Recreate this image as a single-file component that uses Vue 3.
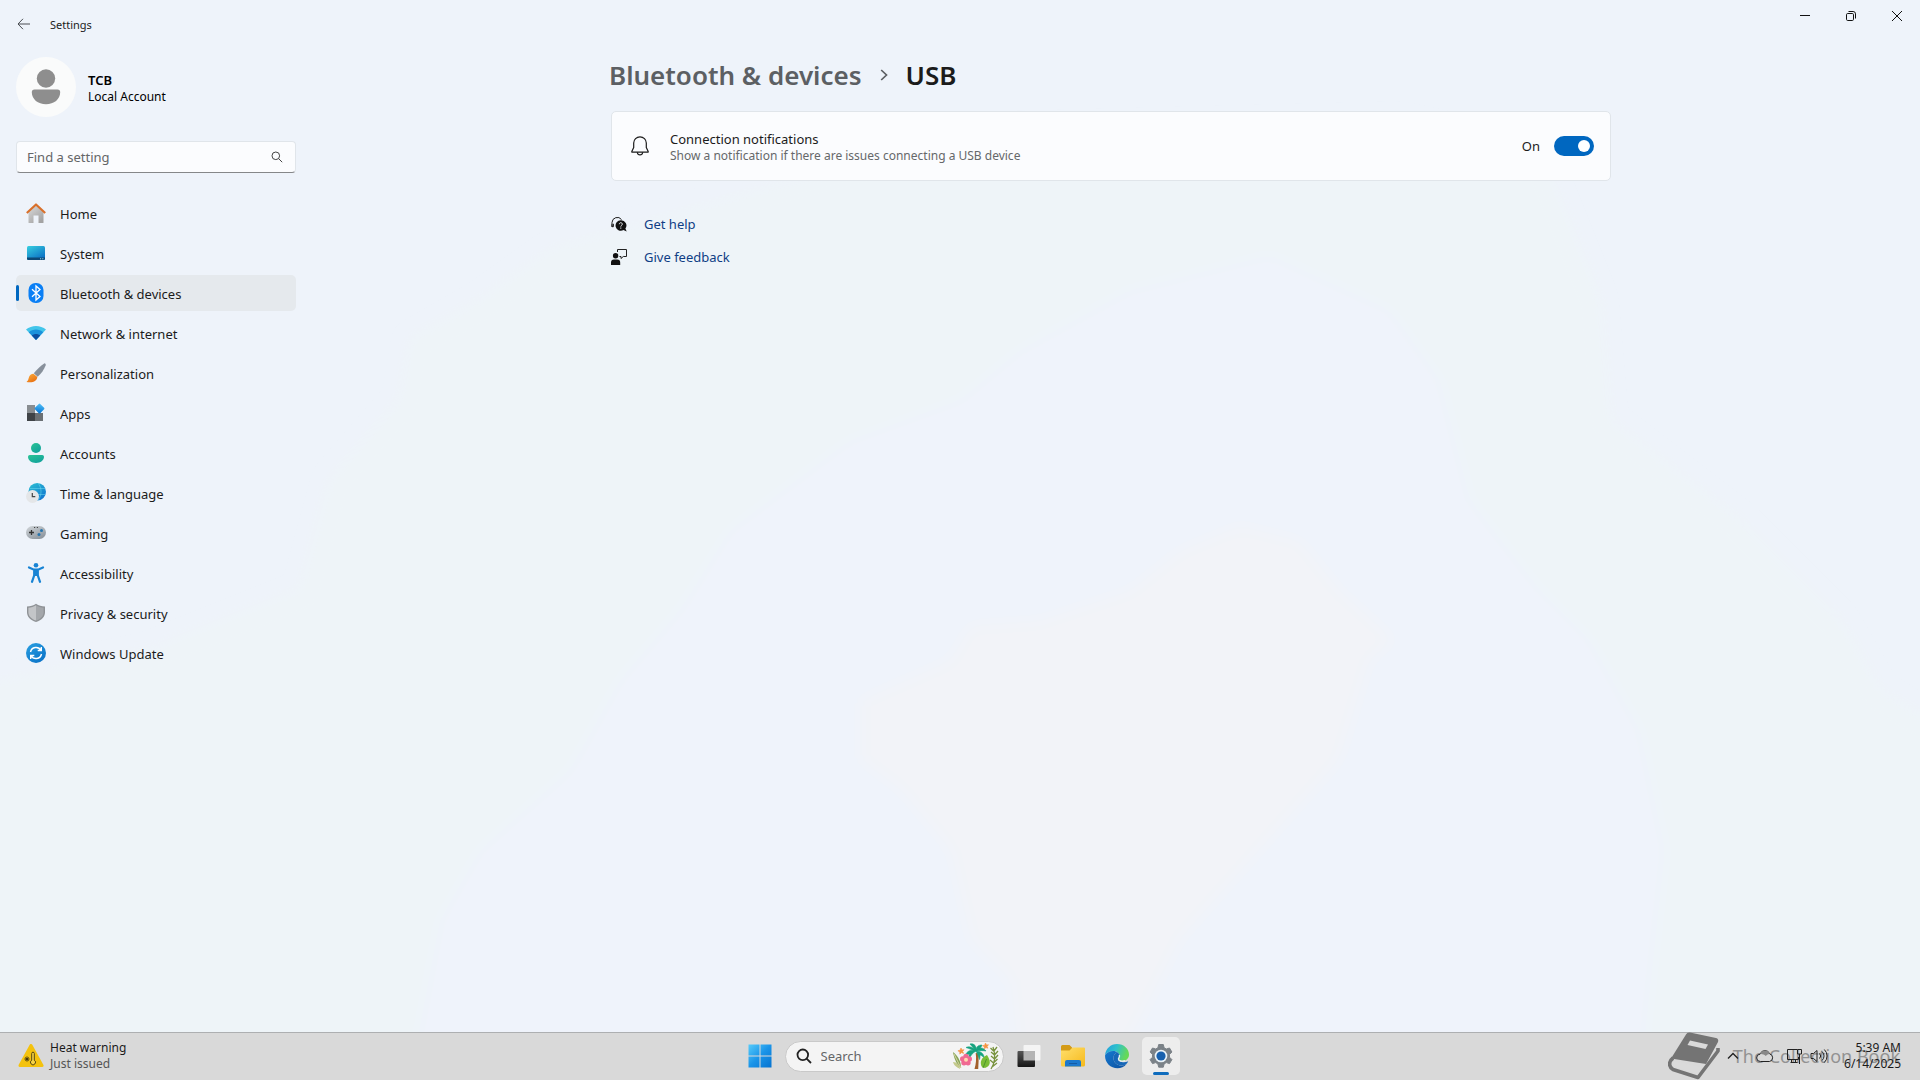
<template>
  <div class="desktop">
    <div class="window">
      <svg class="mica" viewBox="0 0 1920 1032" preserveAspectRatio="none" aria-hidden="true">
        <defs>
          <filter id="soft"><feGaussianBlur stdDeviation="8" /></filter>
        </defs>
        <g filter="url(#soft)">
          <path
            d="M-40 690L150 650 300 590 330 480 400 400 410 340 480 300 550 250 760 190 1000 130 1400 120 1540 150 1600 300 1610 420 1740 520 1790 570 1840 620 1880 690 1960 740V1080H-40z"
            fill="#eef4f8"
          />
          <path
            d="M1270 255L1130 290 1020 350 960 400 850 440 730 530 680 610 620 680 570 770 480 850 440 920 410 1080H1640L1665 850 1640 730 1590 640 1540 590 1470 500 1440 380 1390 310z"
            fill="#eff3fb"
          />
          <path
            d="M1240 525L1180 550 1130 590 1040 620 970 625 950 660 860 700V760L900 790 950 850 970 940 1010 980 1020 1080H1110L1180 940 1260 850 1340 760 1370 660 1395 640 1340 590 1300 540z"
            fill="#f2f3f8"
          />
        </g>
      </svg>

      <header class="titlebar">
        <button class="back" aria-label="Back">
          <svg width="14" height="14" viewBox="0 0 14 14" fill="none" stroke="#4a4d52">
            <path d="M13 7H1M6 1.8L1 7l5 5.2" />
          </svg>
        </button>
        <span class="title">Settings</span>
        <div class="winButtons">
          <button aria-label="Minimize">
            <svg width="10" height="10" viewBox="0 0 10 10" stroke="#111"><path d="M0 4.5h10" /></svg>
          </button>
          <button aria-label="Restore">
            <svg width="10" height="10" viewBox="0 0 10 10" fill="none" stroke="#111">
              <rect x=".5" y="2.5" width="7" height="7" rx="1.2" />
              <path d="M2.5 .5h4.6a2.4 2.4 0 0 1 2.4 2.4v4.6" />
            </svg>
          </button>
          <button aria-label="Close">
            <svg width="10" height="10" viewBox="0 0 10 10" stroke="#111"><path d="M0 0l10 10M10 0L0 10" /></svg>
          </button>
        </div>
      </header>

      <div class="body">
        <aside class="sidebar">
          <div class="account">
            <span class="avatar">
              <svg width="60" height="60" viewBox="0 0 60 60" fill="#8e8e8e">
                <circle cx="30" cy="21.500" r="9.2" />
                <path d="M18.500 32.500h23a2.700 2.700 0 0 1 2.700 2.700c0 7-6.200 12-14.200 12s-14.200-5-14.200-12a2.700 2.700 0 0 1 2.700-2.700z" />
              </svg>
            </span>
            <div class="user">
              <div class="userName">TCB</div>
              <div class="userType">Local Account</div>
            </div>
          </div>

          <label class="find">
            <input v-model="query" type="text" placeholder="Find a setting" aria-label="Find a setting">
            <svg width="12" height="12" viewBox="0 0 12 12" fill="none" stroke="#444">
              <circle cx="4.800" cy="4.800" r="3.800" />
              <path d="M7.600 7.600l3.600 3.600" />
            </svg>
          </label>

          <nav>
            <a
              v-for="item in navItems"
              :key="item.name"
              href="#"
              class="navItem"
              :class="{ active: item.name === current }"
              @click.prevent="current = item.name"
            >
              <svg width="20" height="20" viewBox="0 0 20 20" v-html="item.icon"></svg>
              <span>{{ item.name }}</span>
            </a>
          </nav>
        </aside>

        <main class="main">
          <div class="content">
            <h1>
              <a href="#">Bluetooth &amp; devices</a>
              <svg width="8" height="12" viewBox="0 0 8 12" fill="none" stroke="#5c5f63" stroke-width="1.700">
                <path d="M1.200 1l5.300 5-5.300 5" />
              </svg>
              <span>USB</span>
            </h1>

            <section class="card">
              <svg width="18" height="20" viewBox="0 0 18 20" fill="none" stroke="#1b1b1b" stroke-width="1.200">
                <path d="M9 .8a6.300 6.300 0 0 0-6.300 6.300v4.500L.8 15.600v.5h16.400v-.5l-1.900-4V7.100A6.300 6.300 0 0 0 9 .8z" stroke-linejoin="round" />
                <path d="M6.300 16.200c.2 1.600 1.300 2.700 2.700 2.700s2.500-1.100 2.700-2.700" />
              </svg>
              <label for="connNotify" class="cardText">
                <span class="cardTitle">Connection notifications</span>
                <span class="cardDesc">Show a notification if there are issues connecting a USB device</span>
              </label>
              <span class="state">{{ notify ? 'On' : 'Off' }}</span>
              <input id="connNotify" v-model="notify" type="checkbox" role="switch" class="toggle">
            </section>

            <div class="links">
              <a href="#">
                <svg width="16" height="16" viewBox="0 0 16 16">
                  <path d="M1 11V6.500A5.300 5.300 0 0 1 10.500 3.500M1 8.200v2.500h1.400V7.800" fill="none" stroke="#1b1b1b" />
                  <path d="M9.800 4.200a5.300 5.300 0 1 0 2.700 9.900l3.200 1.500-1.300-3A5.300 5.300 0 0 0 9.800 4.200z" fill="#111" />
                  <path d="M8.300 8.200c0-2 3-2 3 0 0 1.200-1.500 1.100-1.500 2.400M9.800 11.500v1.200" fill="none" stroke="#f3f6fa" />
                </svg>
                <span>Get help</span>
              </a>
              <a href="#">
                <svg width="16" height="16" viewBox="0 0 16 16">
                  <circle cx="4.600" cy="6.800" r="2.700" fill="#111" />
                  <path d="M0 16v-2.500a3 3 0 0 1 3-3h3.200a3 3 0 0 1 3 3V16z" fill="#111" />
                  <path d="M6.500 3V.5h9v7h-3.200l-2.300 2v-2H8.500" fill="none" stroke="#222" />
                </svg>
                <span>Give feedback</span>
              </a>
            </div>
          </div>
        </main>
      </div>
    </div>

    <footer class="taskbar">
      <button class="weather">
        <svg width="26" height="24" viewBox="0 0 26 24">
          <path d="M13 1.500L24 21.500H2z" fill="#f4c20d" stroke="#f4c20d" stroke-width="3" stroke-linejoin="round" />
          <circle cx="9" cy="15" r="1.600" fill="#453a10" />
          <path d="M9 12v6M6 15h6M7 13l4 4M11 13l-4 4" stroke="#453a10" stroke-width=".6" />
          <path d="M13.700 9.500a1.300 1.300 0 0 1 2.600 0v6.700a2.500 2.500 0 1 1-2.600 0z" fill="#f7d345" stroke="#453a10" stroke-width=".9" />
        </svg>
        <span>
          <span class="line">Heat warning</span>
          <span class="line dim">Just issued</span>
        </span>
      </button>

      <div class="dock">
        <button class="tile" aria-label="Start">
          <svg width="24" height="24" viewBox="0 0 24 24">
            <defs>
              <linearGradient id="win" x1="0" y1="0" x2="24" y2="24" gradientUnits="userSpaceOnUse">
                <stop offset="0" stop-color="#58cdfb" />
                <stop offset=".5" stop-color="#1a94e8" />
                <stop offset="1" stop-color="#0571cf" />
              </linearGradient>
            </defs>
            <path d="M.5.500h11v11H.5zM12.500.500h11v11h-11zM.5 12.500h11v11H.5zM12.500 12.500h11v11h-11z" fill="url(#win)" />
          </svg>
        </button>

        <label class="search">
          <svg width="16" height="16" viewBox="0 0 16 16" fill="none" stroke="#222" stroke-width="1.800">
            <circle cx="6.800" cy="6.800" r="5.300" />
            <path d="M10.600 10.600l4.400 4.400" />
          </svg>
          <input type="text" placeholder="Search" aria-label="Search">
          <svg width="48" height="28" viewBox="0 0 48 28">
            <path d="M10 26C6 23 3 17 2 10c5 4 8 9 8 16z" fill="#86a558" />
            <path d="M9 27c-3-2-6-3-7-7 4 0 7 3 7 7z" fill="#c4c98c" />
            <path d="M3 12l7 14" stroke="#d9d3a0" fill="none" />
            <path d="M23.500 27c1.500-5 2-10 1.200-16l2.500.3c.8 5 .3 10 0 15.700z" fill="#a3602b" />
            <path d="M25 9C20 7 16 9 14.500 13c2-.8 3-.5 4-1-.8 2-.7 3 .3 4.500.7-3.500 3-5.500 6.200-7.500zM25 9c-3-4-7-5-10-3.500 3 1 6 2.500 10 3.500zM25 9c-2-2-4-5-6-7 4-.8 7 2 6 7zM25 9c0-4 2-6 6-6-.5 2-2 4-6 6zM25 9c3-4 7-4 10 0-3-.5-6-.5-10 0zM25 9c5 0 8 3 8 6.500-2-1.500-3-2.500-4-2.500 0 2 0 3-.5 4.500-1-3-2-6-3.500-8.500z" fill="#16a37f" stroke="#16a37f" stroke-width=".6" />
            <path d="M31 25c-3-5 0-10 5-12 4 6 4 11-2 13z" fill="#79bd35" />
            <path d="M32 26l3.500-9" stroke="#4d942b" fill="none" />
            <g stroke="#78933e" stroke-width="1.300" fill="none">
              <path d="M40 27c4-6 5-13 2-22M42.500 9l-3-3M43.500 13l-3.500-3M43.500 17l-3.500-3M42.500 21l-3.500-3M43 9l3-4M43.500 13l3.500-4M43.500 17l3.500-4M42.500 21l4-4M41 25l5-4" />
            </g>
            <g fill="#f06a92">
              <circle cx="15" cy="14.500" r="2.700" /><circle cx="18.300" cy="17" r="2.700" />
              <circle cx="17" cy="20.800" r="2.700" /><circle cx="13" cy="20.800" r="2.700" />
              <circle cx="11.700" cy="17" r="2.700" />
            </g>
            <circle cx="15" cy="17.800" r="2" fill="#ffd8b0" />
            <path d="M10 6l1 2 2-.3-1.400 1.700 1.100 2-2.200-.8-1.700 1.500.1-2.200-2-1.100 2.200-.6zM34.500 1l1 2 2-.3-1.400 1.700.8 1.800-2-.6-1.500 1.300V4.700l-1.900-1 2.200-.5z" fill="#f59342" stroke="#f59342" stroke-width=".6" />
          </svg>
        </label>

        <button class="tile" aria-label="Task view">
          <svg width="24" height="24" viewBox="0 0 24 24">
            <defs>
              <linearGradient id="tv" x2="0" y2="1"><stop stop-color="#555" /><stop offset="1" stop-color="#161616" /></linearGradient>
            </defs>
            <rect x="6.500" y="1" width="17" height="15.500" rx="1" fill="#f4f4f4" />
            <rect x=".5" y="7" width="17.500" height="16" rx="1" fill="url(#tv)" />
            <path d="M6.500 7H18v9.500H6.500z" fill="#b4b4b4" />
          </svg>
        </button>
        <button class="tile" aria-label="File Explorer">
          <svg width="26" height="24" viewBox="0 0 26 24">
            <defs>
              <linearGradient id="fold" x2="1" y2="1"><stop stop-color="#ffdf6b" /><stop offset="1" stop-color="#f6b91c" /></linearGradient>
            </defs>
            <path d="M1 2.500A1.500 1.500 0 0 1 2.500 1h7l2.500 2.500V8H1z" fill="#d49b17" />
            <path d="M1 6.500h8.500l3-3H24a1 1 0 0 1 1 1V21a1.500 1.500 0 0 1-1.500 1.500h-21A1.500 1.500 0 0 1 1 21z" fill="url(#fold)" />
            <path d="M5 22.500V18a2 2 0 0 1 2-2h12a2 2 0 0 1 2 2v4.500z" fill="#1c79cd" />
            <path d="M9 19.500h8" stroke="#155ca5" />
          </svg>
        </button>
        <button class="tile" aria-label="Edge">
          <svg width="26" height="26" viewBox="0 0 26 26">
            <defs>
              <linearGradient id="edgeTop" x2="1" y2=".3"><stop stop-color="#219ce0" /><stop offset=".5" stop-color="#2fc1cb" /><stop offset="1" stop-color="#66d957" /></linearGradient>
              <linearGradient id="edgeLow" x2="1" y2="1"><stop stop-color="#1579d0" /><stop offset="1" stop-color="#0c509f" /></linearGradient>
            </defs>
            <path d="M1 12.500C1.600 5.700 6.700 1 13 1c7 0 12 5 12 10.500 0 4-3 6.500-6.500 6.500-2.500 0-4-1-4-2 0-.8 1-1.200 1-3 0-3-3-5-6.500-5C5.500 8 2.500 9.500 1 12.500z" fill="url(#edgeTop)" />
            <path d="M1 12.500C2.500 9.500 5.500 8 9 8c2 0 3.600.6 4.800 1.600C11 9.800 9.500 12.500 9.500 15c0 5 4.500 8 9 7.500 1.500-.2 2.700-.7 4-1.500-2.300 3-5.600 4.200-9 4.200C6.500 25.200 1 20 1 12.500z" fill="url(#edgeLow)" />
            <path d="M13.800 9.600C11 9.800 9.500 12.500 9.500 15c0 5 4.500 8 9 7.500 2.700-.3 5-2 5.700-4.300-3.700 2-9.700 1-9.700-2.200 0-.8 1-1.200 1-3 0-1.400-.7-2.600-1.700-3.400z" fill="#1667b8" />
            <path d="M15.300 12c.8 1.800-.8 3-.8 4 0 2 3.500 2.700 6.500 1.700" stroke="#e8eef2" stroke-width="1.400" fill="none" />
          </svg>
        </button>
        <button class="tile running" aria-label="Settings">
          <svg width="26" height="26" viewBox="0 0 26 26">
            <path d="M10.700 1.500h4.600l.8 3.300 2.200 1.200 3.200-1 2.400 4-2.400 2.400v2.800l2.400 2.400-2.400 4-3.200-1-2.200 1.300-.8 3.300h-4.600l-.8-3.300-2.200-1.300-3.200 1-2.400-4 2.400-2.400v-2.800L2.100 9l2.400-4 3.200 1 2.200-1.200z" fill="#7b8288" stroke="#7b8288" stroke-linejoin="round" />
            <circle cx="13" cy="13" r="6.300" fill="#e9f2f8" />
            <circle cx="13" cy="13" r="4.600" fill="#1760ae" />
          </svg>
        </button>
      </div>

      <div class="tray">
        <button aria-label="Show hidden icons">
          <svg width="12" height="8" viewBox="0 0 12 8" fill="none" stroke="#222" stroke-width="1.400"><path d="M1 6.500l5-5 5 5" /></svg>
        </button>
        <button aria-label="OneDrive">
          <svg width="18" height="14" viewBox="0 0 18 14" stroke="#222">
            <path d="M4.500 12.500a3.700 3.700 0 0 1-.3-7.400 5 5 0 0 1 9.500-.2 3.900 3.900 0 0 1-.2 7.600z" fill="#d9d9d9" />
            <path d="M4.200 5.100a5 5 0 0 1 9.500-.2c-2.300.2-3.200 1.300-4 2C8 5.500 6.300 4.800 4.200 5.100z" fill="#888" stroke="none" />
          </svg>
        </button>
        <button class="status" aria-label="Network and volume">
          <svg width="18" height="18" viewBox="0 0 18 18" fill="none" stroke="#222">
            <path d="M11 2.500H1.500v10h11V10M4.500 15.500h7M5.500 12.500v3M9.500 12.500v3M11.500 2.500h4V7h-4zM13.500 7v10" />
          </svg>
          <svg width="18" height="16" viewBox="0 0 18 16" fill="none" stroke="#222">
            <path d="M1 5.500h2.500L7 2.500v11l-3.500-3H1zM9.500 5.500a3.500 3.500 0 0 1 0 5M12 3.500a6 6 0 0 1 0 9M14.300 1.500a9 9 0 0 1 0 13" />
          </svg>
        </button>
        <button class="clock">
          <span class="line">5:39 AM</span>
          <span class="line">6/14/2025</span>
        </button>
      </div>

      <div class="brand">
        <svg width="52" height="48" viewBox="0 0 52 48">
          <path d="M22 .5L48 6c2 .5 2.700 2 2 4L38 32 3 26.500 18 2.500c1-1.600 2-2.400 4-2z" fill="#747474" />
          <path d="M22 8.500l18 4-2.500 4.500-18-4z" fill="#dadada" />
          <path d="M5 26c-5 4-4 9 0 11.500l25 8L50 19v-3" fill="none" stroke="#747474" stroke-width="3.600" stroke-linejoin="round" />
          <path d="M6 29.500l27 5.500-3 7-23-7c-2-1.500-2.500-4-1-5.500z" fill="#dadada" />
        </svg>
        <span>The Collection Book</span>
      </div>
    </footer>
  </div>
</template>

<script setup>
import { ref } from "vue";

const query = ref("");
const notify = ref(true);
const current = ref("Bluetooth & devices");

const grad = (id, from, to) =>
  `<linearGradient id="${id}" x2=".7" y2="1"><stop stop-color="${from}"/><stop offset="1" stop-color="${to}"/></linearGradient>`;

const navItems = [
  {
    name: "Home",
    icon: `${grad("home", "#dcdcdc", "#a3a3a3")}<path d="M2.500 9L10 2l7.500 7v10.500a.5.500 0 0 1-.5.500h-4.500v-7.500h-5V20H3a.5.500 0 0 1-.5-.5z" fill="url(#home)"/><path d="M.8 10L10 1.500 19.200 10" fill="none" stroke="#d9702b" stroke-width="2.200" stroke-linejoin="round"/>`,
  },
  {
    name: "System",
    icon: `${grad("sys", "#37cfe0", "#0b6fc4")}<rect x="1" y="3" width="18" height="14" rx="1.500" fill="url(#sys)"/><path d="M1 14.500h18v1a1.500 1.500 0 0 1-1.500 1.500h-15A1.500 1.500 0 0 1 1 15.500z" fill="#0d4875"/><path d="M14 15.800h1.200M16.200 15.800h1.200" stroke="#8fd3f0"/>`,
  },
  {
    name: "Bluetooth & devices",
    icon: `<rect x="2.500" width="15" height="20" rx="7" fill="#0a7ff5"/><path d="M6 6.300l8 7.200-4 3.500V3l4 3.500-8 7.200" fill="none" stroke="#fff" stroke-width="1.300"/>`,
  },
  {
    name: "Network & internet",
    icon: `<path d="M0 6.500C5.500 1.700 14.500 1.700 20 6.500L10 17z" fill="#42c5ea"/><path d="M2.700 9.300c4.200-3.600 10.400-3.600 14.600 0L10 17z" fill="#1b92dc"/><path d="M5.800 12.500c2.500-2 5.900-2 8.400 0L10 17z" fill="#0c4fa0"/>`,
  },
  {
    name: "Personalization",
    icon: `${grad("brush", "#fbb040", "#e86f10")}<path d="M18.500.300c1 .2 1.500 1 1.200 1.900-1.500 4-4.500 8.500-8 11.500L7.800 10.300C10.700 6.500 15 2.500 18.500.300z" fill="#87909b"/><path d="M7.500 10.700l3.800 3.200c0 3.600-4.300 6.300-10.800 5 1.600-1 1.800-2.400 2.300-4.200.6-2.500 2.500-4 4.700-4z" fill="url(#brush)"/>`,
  },
  {
    name: "Apps",
    icon: `${grad("apps", "#52c1f8", "#0b7ad7")}<path d="M1 2h8v8H1z" fill="#888d91"/><path d="M1 10h8v8H1z" fill="#3f4347"/><path d="M9 10h8v8H9z" fill="#6b7074"/><rect x="9.800" y="1.800" width="7.500" height="7.500" rx="1" transform="rotate(45 13.500 5.500)" fill="url(#apps)"/>`,
  },
  {
    name: "Accounts",
    icon: `${grad("acc", "#2ac494", "#12a29c")}<circle cx="10" cy="5" r="5" fill="url(#acc)"/><path d="M3.800 12h12.400a1.800 1.800 0 0 1 1.800 1.800C18 17.500 14.500 20 10 20s-8-2.500-8-6.200A1.800 1.800 0 0 1 3.800 12z" fill="url(#acc)"/>`,
  },
  {
    name: "Time & language",
    icon: `${grad("time", "#2cc1d2", "#1177d0")}<circle cx="11.200" cy="8.800" r="8.800" fill="url(#time)"/><path d="M12 0c4 5 4 12 0 17.500M4 5.500h15M10 11.500h9.500" fill="none" stroke="#72dcef" stroke-width=".5"/><circle cx="6.500" cy="13.500" r="6.500" fill="#e4e6e8"/><path d="M6.300 10v3.700h3" fill="none" stroke="#444" stroke-width="1.200"/>`,
  },
  {
    name: "Gaming",
    icon: `${grad("game", "#d2d7db", "#8d959d")}<rect y="3" width="20" height="13" rx="6.500" fill="url(#game)"/><path d="M5.500 7v5M3 9.500h5" stroke="#333" stroke-width="1.300"/><circle cx="15.500" cy="7.500" r="1.500" fill="#2875ae"/><circle cx="13" cy="11.500" r="1.500" fill="#2875ae"/><path d="M8 4.500h1.200M10.800 4.500H12" stroke="#444"/>`,
  },
  {
    name: "Accessibility",
    icon: `<circle cx="10" cy="2.300" r="2.300" fill="#1783d4"/><path d="M3 4.500L8 6.700h4l5-2.200M8.300 7v5L6 18.800M11.700 7v5l2.300 6.800" fill="none" stroke="#1783d4" stroke-width="2.200" stroke-linecap="round"/><path d="M7.500 6.500h5V13h-5z" fill="#1783d4"/>`,
  },
  {
    name: "Privacy & security",
    icon: `<path d="M10 .8c2.700 1.800 5.500 2.600 9 2.700v5.700c0 4.300-3 7.800-9 9.800-6-2-9-5.500-9-9.800V3.500C4.500 3.400 7.300 2.600 10 .8z" fill="#8f9296"/><path d="M10 2.300c2.200 1.400 4.800 2.300 7.600 2.500v4.400c0 3.500-2.500 6.500-7.600 8.400z" fill="#a4a7ab"/><path d="M10 2.300C7.800 3.700 5.200 4.600 2.400 4.800v4.400c0 3.500 2.500 6.500 7.600 8.400z" fill="#c3c5c8"/>`,
  },
  {
    name: "Windows Update",
    icon: `${grad("upd", "#2aa0e2", "#0c74c8")}<circle cx="10" cy="10" r="10" fill="url(#upd)"/><path d="M4.500 9A5.700 5.700 0 0 1 15 7.300M15.500 11A5.700 5.700 0 0 1 5 12.700M15.300 4v3.500h-3.600M4.700 16v-3.500h3.600" fill="none" stroke="#fff" stroke-width="1.400"/>`,
  },
];
</script>

<style>
body {
  margin: 0;
}
</style>

<style scoped>
.desktop {
  min-height: 100vh;
  display: flex;
  flex-direction: column;
  font-family: "Noto Sans", "Open Sans", sans-serif;
  font-size: 13px;
  line-height: 20px;
  color: #1b1b1b;
}

.desktop * {
  box-sizing: border-box;
}

button {
  display: flex;
  align-items: center;
  padding: 0;
  border: 0;
  background: none;
  color: inherit;
  font: inherit;
}

input {
  font: inherit;
  color: inherit;
}

a {
  text-decoration: none;
}

svg {
  display: block;
  flex: none;
}

.window {
  position: relative;
  isolation: isolate;
  flex: 1;
  background: #eef3fa;
}

/* wallpaper tint behind the window */
.mica {
  position: absolute;
  inset: 0;
  z-index: -1;
  width: 100%;
  height: 100%;
}

/* title bar */
.titlebar {
  display: flex;
  height: 48px;
  padding-left: 17px;
}

.back {
  width: 33px;
}

.title {
  align-self: center;
  padding-top: 2px;
  font-size: 11px;
}

.winButtons {
  display: flex;
  margin-left: auto;
}

.winButtons button {
  width: 46px;
  height: 32px;
  justify-content: center;
}

.body {
  display: flex;
}

/* sidebar */
.sidebar {
  flex: none;
  width: 302px;
  padding: 9px 6px 0 16px;
}

.account {
  display: flex;
  align-items: center;
  gap: 12px;
}

.avatar {
  border-radius: 50%;
  background: #fafbfb;
}

.user {
  padding-top: 2px;
}

.userName {
  font-weight: 600;
  line-height: 18px;
  color: #000;
}

.userType {
  font-size: 12px;
  line-height: 16px;
  color: #000;
}

.find {
  display: flex;
  align-items: center;
  height: 32px;
  margin: 24px 0 22px;
  padding: 0 12px 0 10px;
  border: 1px solid #e0e5ea;
  border-bottom-color: #858789;
  border-radius: 4px;
  background: #fbfcfe;
}

.find input,
.search input {
  flex: 1;
  min-width: 0;
  padding: 0;
  border: 0;
  outline: 0;
  background: none;
}

.find input::placeholder,
.search input::placeholder {
  color: #646668;
  opacity: 1;
}

.navItem {
  position: relative;
  display: flex;
  align-items: center;
  gap: 14px;
  height: 36px;
  margin-bottom: 4px;
  padding-left: 10px;
  border-radius: 5px;
  color: #1b1b1b;
}

.navItem span {
  padding-top: 2px;
}

.active {
  background: #e5e9ed;
}

.active::before {
  content: "";
  position: absolute;
  left: 0;
  width: 3px;
  height: 16px;
  border-radius: 2px;
  background: #0067c0;
}

/* page */
.main {
  flex: 1;
  padding: 8px 24px;
}

.content {
  max-width: 1000px;
  margin: 0 auto;
}

h1 {
  display: flex;
  align-items: center;
  gap: 18px;
  margin: 0 0 17px -2px;
  font-size: 26px;
  font-weight: 600;
  line-height: 38px;
}

h1 a {
  color: #5c5f63;
}

.card {
  display: flex;
  align-items: center;
  min-height: 70px;
  padding: 0 16px 0 19px;
  border: 1px solid #e0e5ea;
  border-radius: 5px;
  background: #fbfcfe;
}

.cardText {
  flex: 1;
  margin-left: 21px;
  padding-top: 2px;
}

.cardText span {
  display: block;
}

.cardTitle {
  line-height: 18px;
}

.cardDesc {
  font-size: 12px;
  line-height: 16px;
  color: #66686a;
}

.toggle {
  appearance: none;
  display: flex;
  align-items: center;
  width: 40px;
  height: 20px;
  margin: 0 0 0 14px;
  padding: 0 4px;
  border-radius: 10px;
  background: #8a8c8e;
}

.toggle::before {
  content: "";
  width: 12px;
  height: 12px;
  border-radius: 50%;
  background: #fff;
}

.toggle:checked {
  justify-content: flex-end;
  background: #0067c0;
}

.links {
  display: flex;
  flex-direction: column;
  align-items: flex-start;
  gap: 13px;
  margin-top: 33px;
}

.links a {
  display: flex;
  align-items: center;
  gap: 17px;
  color: #0f3e85;
}

/* taskbar */
.taskbar {
  position: relative;
  display: grid;
  grid-template-columns: 1fr auto 1fr;
  height: 48px;
  border-top: 1px solid #adafb1;
  background: #d9d9d9;
}

.weather {
  gap: 6px;
  padding: 0 0 2px 18px;
  text-align: left;
}

.line {
  display: block;
  font-size: 12px;
  line-height: 16px;
}

.dim {
  color: #555;
}

.dock {
  display: flex;
  align-items: center;
  padding-bottom: 1px;
}

.tile {
  justify-content: center;
  width: 38px;
  height: 38px;
  margin: 0 3px;
  border-radius: 5px;
}

.running {
  position: relative;
  background: #ededed;
}

.running::after {
  content: "";
  position: absolute;
  bottom: 0;
  width: 16px;
  height: 3px;
  border-radius: 2px;
  background: #0f6cbd;
}

.search {
  display: flex;
  align-items: center;
  gap: 9px;
  width: 219px;
  height: 31px;
  margin: 0 3px;
  padding: 0 4px 0 10px;
  border: 1px solid #c9c9c9;
  border-radius: 16px;
  background: #f4f4f4;
}

.tray {
  display: flex;
  justify-content: flex-end;
  padding: 0 19px 2px 0;
}

.tray button {
  position: relative;
  z-index: 1;
  justify-content: center;
  width: 32px;
}

.tray .status {
  gap: 6px;
  width: 52px;
}

.tray .clock {
  flex-direction: column;
  align-items: flex-end;
  width: 68px;
}

.brand {
  position: absolute;
  right: 20px;
  top: 0;
  display: flex;
  align-items: center;
  gap: 13px;
  height: 46px;
  font-size: 18px;
  color: #929292;
}
</style>
